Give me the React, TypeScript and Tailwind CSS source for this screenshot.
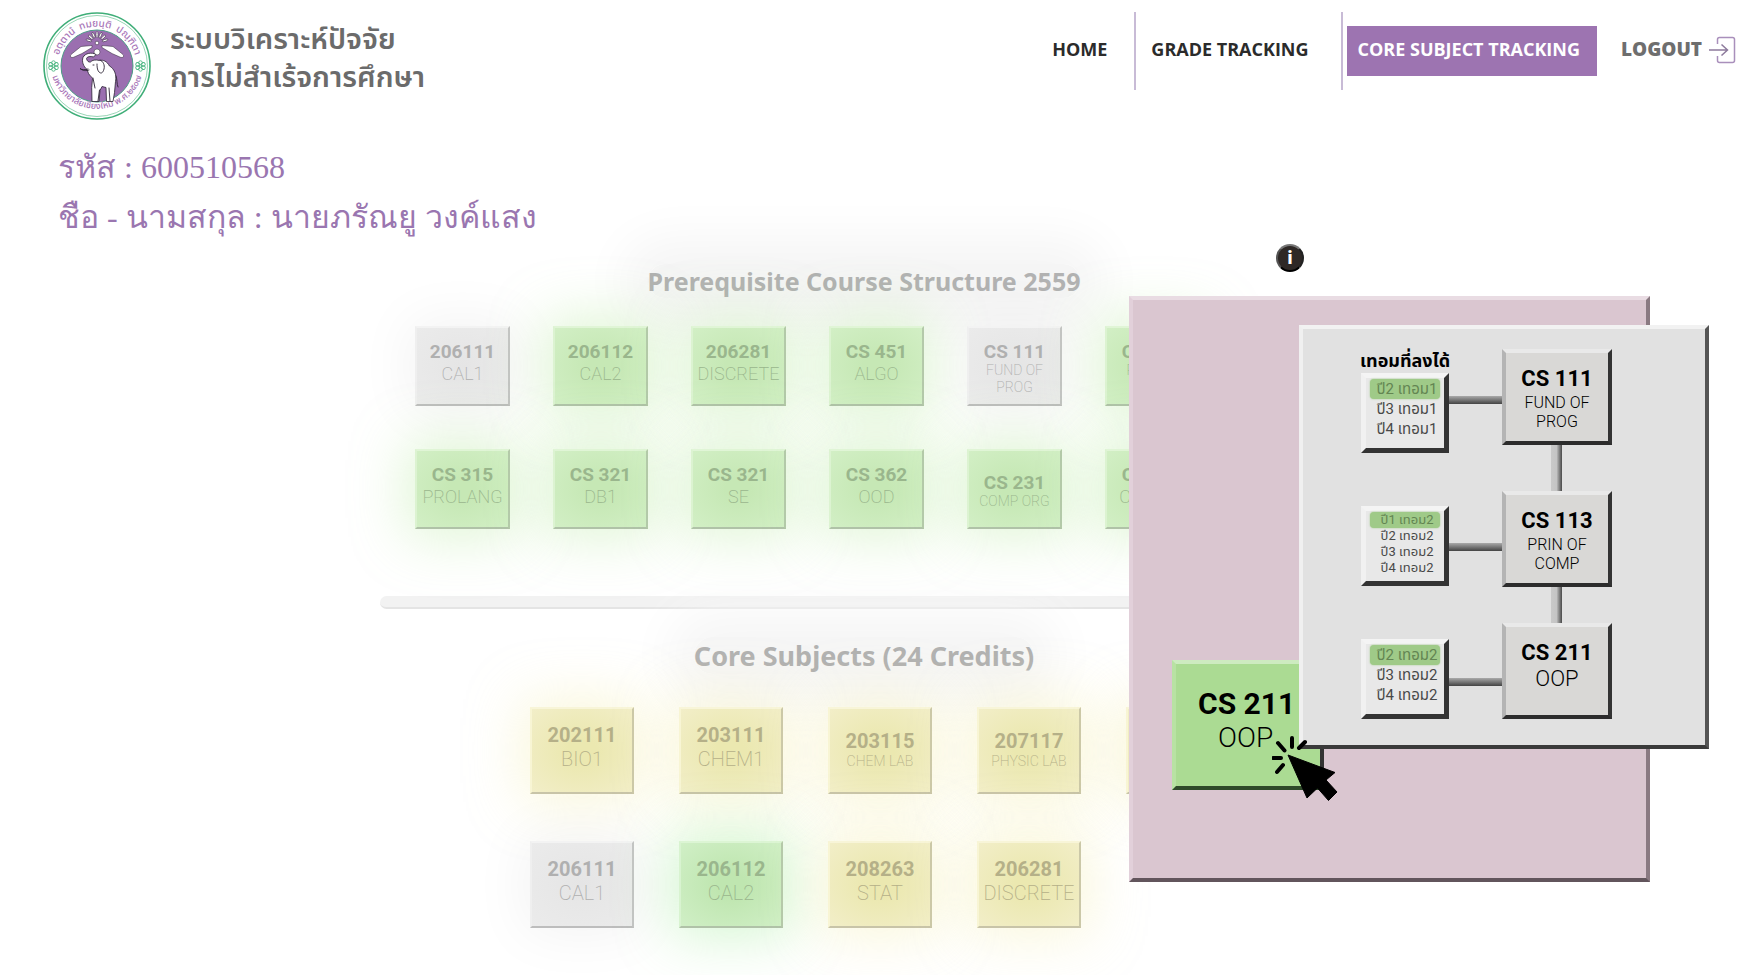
import React from "react";

type Tone = "gray" | "green" | "lime" | "yellow";
type Course = { code: string; name: string; tone: Tone; small?: boolean };

const prerequisites: Course[] = [
  { code: "206111", name: "CAL1", tone: "gray" },
  { code: "206112", name: "CAL2", tone: "green" },
  { code: "206281", name: "DISCRETE", tone: "green" },
  { code: "CS 451", name: "ALGO", tone: "green" },
  { code: "CS 111", name: "FUND OF PROG", tone: "gray", small: true },
  { code: "CS 113", name: "PRIN OF COMP", tone: "green", small: true },
  { code: "CS 315", name: "PROLANG", tone: "green" },
  { code: "CS 321", name: "DB1", tone: "green" },
  { code: "CS 321", name: "SE", tone: "green" },
  { code: "CS 362", name: "OOD", tone: "green" },
  { code: "CS 231", name: "COMP ORG", tone: "green", small: true },
  { code: "CS 352", name: "COM OS", tone: "green" },
];

const coreSubjects: Course[] = [
  { code: "202111", name: "BIO1", tone: "yellow" },
  { code: "203111", name: "CHEM1", tone: "yellow" },
  { code: "203115", name: "CHEM LAB", tone: "yellow", small: true },
  { code: "207117", name: "PHYSIC LAB", tone: "yellow", small: true },
  { code: "207187", name: "PHYSICS", tone: "yellow" },
  { code: "206111", name: "CAL1", tone: "gray" },
  { code: "206112", name: "CAL2", tone: "lime" },
  { code: "208263", name: "STAT", tone: "yellow" },
  { code: "206281", name: "DISCRETE", tone: "yellow" },
];

const tones: Record<Tone, string> = {
  gray: "border-t-[#f3f3f3] border-l-[#efefef] border-r-[#c4c4c4] border-b-[#bdbdbd] bg-[radial-gradient(#e5e5e5,#ebebeb)] text-[#b0b0b0] shadow-[0_0_56px_6px_rgba(0,0,0,0.05)]",
  green:
    "border-t-[#e0f5d6] border-l-[#dcf3d1] border-r-[#b4c9aa] border-b-[#b0c2a8] bg-[radial-gradient(#c6e8b5_20%,#d2efc5)] text-[#9ab68d] shadow-[0_0_56px_8px_rgba(160,225,130,0.34)]",
  lime: "border-t-[#dcf5d4] border-l-[#d8f3d0] border-r-[#b4c9aa] border-b-[#b0c2a8] bg-[radial-gradient(#bfe6b0_20%,#d0efc6)] text-[#9ab68d] shadow-[0_0_56px_8px_rgba(130,230,120,0.34)]",
  yellow:
    "border-t-[#f8f5d8] border-l-[#f8f5d4] border-r-[#cbc8a8] border-b-[#c8c4a8] bg-[radial-gradient(#ebe8b0_20%,#f2eec8)] text-[#b5b088] shadow-[0_0_56px_8px_rgba(240,232,150,0.34)]",
};

function PrerequisiteTile({ code, name, tone, small }: Course) {
  const oneLine = small && name.length < 10;
  const nameStyle = oneLine
    ? "text-sm leading-[17px] whitespace-nowrap"
    : small
      ? "px-3 text-sm leading-[17px]"
      : "text-lg leading-6";
  return (
    <button
      type="button"
      className={`flex h-20 w-[95px] flex-col items-center border-2 text-center ${oneLine ? "justify-center pt-1" : "justify-start pt-[13px]"} ${tones[tone]}`}
    >
      <span className="text-[19px] leading-[21px] font-bold">{code}</span>
      <span className={`font-extralight ${nameStyle}`}>{name}</span>
    </button>
  );
}

function CoreTile({ code, name, tone, small }: Course) {
  return (
    <button
      type="button"
      className={`flex h-[87px] w-[104px] flex-col items-center border-2 text-center ${small ? "justify-center pb-1" : "justify-start pt-[14px]"} ${tones[tone]}`}
    >
      <span className="text-xl leading-6 font-bold">{code}</span>
      <span className={`font-extralight ${small ? "text-sm leading-4" : "text-xl leading-6"}`}>{name}</span>
    </button>
  );
}

function Crest() {
  const rays = [-72, -48, -24, 0, 24, 48, 72];
  return (
    <svg viewBox="0 0 108 108" className="size-[108px] shrink-0" role="img" aria-label="มหาวิทยาลัยเชียงใหม่">
      <defs>
        <path id="crest-top" d="M14.500 54a39.500 39.500 0 0 1 79 0" />
        <path id="crest-bottom" d="M7 50a47 47 0 0 0 94 0" />
      </defs>
      <circle cx="54" cy="54" r="53" fill="#fff" stroke="#3fae78" strokeWidth="1.6" />
      <circle cx="54" cy="54" r="50.5" fill="none" stroke="#7fcaa3" strokeWidth="0.8" />
      <circle cx="54" cy="54" r="36" fill="#9b6fb0" stroke="#4c9b86" strokeWidth="1" />
      <g fill="#a875b8" fontSize="10" fontWeight="500" textAnchor="middle">
        <text>
          <textPath href="#crest-top" startOffset="50%">อตฺตานํ&#160; ทมยนฺติ&#160; ปณฺฑิตา</textPath>
        </text>
        <text fontSize="9">
          <textPath href="#crest-bottom" startOffset="50%">มหาวิทยาลัยเชียงใหม่ พ.ศ.๒๕๐๗</textPath>
        </text>
      </g>
      {[10.5, 97.5].map((x) => (
        <g key={x} fill="none" stroke="#4fb784" strokeWidth="0.9">
          {[0, 60, 120, 180, 240, 300].map((a) => (
            <circle key={a} cx={x} cy="50.600" r="1.800" transform={`rotate(${a} ${x} 54)`} />
          ))}
          <circle cx={x} cy="54" r="1.200" />
        </g>
      ))}
      <g fill="#fff" stroke="#2b2333" strokeWidth="0.5">
        {rays.map((a) => (
          <ellipse key={a} cx="54" cy="22.500" rx="1" ry="3" transform={`rotate(${a} 54 31)`} />
        ))}
        <path d="M49 33.500L38 34.500 28 42.500q-2 3 2 3l9-4 10-6z" />
        <path d="M59 33.500l11 1 10 8q2 3-2 3l-9-4-10-6z" />
        <circle cx="54" cy="31" r="1.800" />
        <circle cx="54" cy="40" r="3" />
      </g>
      <path
        d="M53 42.500c-4-2.500-11-1.500-13 3-1.500 4 .5 9 4 12l1.500 4c1.500 2.500 3 3 4 5l-.8 9 .3 14h7l1-11 2-4 4 1 .5 14h6.500l1.500-9 1-11c1.500-7-1.500-13-6-15.500-2.500-4.500-6-6.500-10-5.500-4-1-7.500-.5-9 1.500-2 .5-3.500-1-4-3.500.5-2 4-2.500 7-1.500z"
        fill="#fff"
        stroke="#2b2333"
        strokeWidth="0.8"
        strokeLinejoin="round"
      />
      <path
        d="M57 48c3 1 5 5 4 9s-3 5-5 3-2-6-2-8M45 57c-3 1-6 1-8-.5 3 2.500 6 2.500 9 1.500M73 64c1.500 4 .5 8 2 11M50 66l2 10M55 89l1.500-11M66 76l1 13M50 53h1"
        fill="none"
        stroke="#2b2333"
        strokeWidth="0.9"
        strokeLinecap="round"
      />
    </svg>
  );
}

function LogoutIcon() {
  return (
    <svg viewBox="0 0 28 28" className="h-7 w-7" fill="none" stroke="#a98fbb" strokeWidth="1.500" aria-hidden="true">
      <path d="M9.500 8V3.500a2 2 0 0 1 2-2h13a2 2 0 0 1 2 2v21a2 2 0 0 1-2 2h-13a2 2 0 0 1-2-2V20" />
      <path d="M1 14h18.500M13.500 8.500l6 5.500-6 5.500" stroke="#8d7a9c" />
    </svg>
  );
}

function ClickCursor() {
  return (
    <svg viewBox="0 0 66 66" className="size-[66px]" aria-hidden="true">
      <path d="M16 17l47 17.500-9 7.500 11 12-8.500 8.500L45.500 50 35 60z" fill="#000" stroke="#000" strokeLinejoin="round" transform="translate(0 2)" />
      <path d="M6 7l6.500 7.500M20 2v9M33 6l-6 6M1 22h8M5 36l6-7" stroke="#000" strokeWidth="4" strokeLinecap="round" />
    </svg>
  );
}

function TermBox({ terms }: { terms: string[] }) {
  const dense = terms.length > 3;
  return (
    <ul className="flex h-20 w-[88px] flex-col items-center border-[5px] border-t-[#f4f4f4] border-r-[#333] border-b-[#333] border-l-[#f1f1f1] bg-[#e8e8e8] pt-px text-[#484848]">
      {terms.map((term, i) => (
        <li
          key={term}
          className={`w-[70px] pl-1 text-center whitespace-nowrap ${dense ? "text-[13px] leading-4" : "text-[15px] leading-5"} ${i === 0 ? "rounded-sm bg-[#9fca88] text-[#638552] shadow-[0_0_2px_#9fca88]" : ""}`}
        >
          {term}
        </li>
      ))}
    </ul>
  );
}

function ChainBox({ code, name }: { code: string; name: string }) {
  const long = name.length > 5;
  return (
    <div className="flex h-24 w-[110px] flex-col items-center border-4 border-t-[#e9e9e9] border-r-[#333] border-b-[#2c2c2c] border-l-[#b4b4b4] bg-[#d9d8d6] pt-3 text-center text-black">
      <span className="text-[22px] leading-7 font-bold">{code}</span>
      <span className={`font-light ${long ? "w-20 text-base leading-[19px]" : "text-[22px] leading-6"}`}>{name}</span>
    </div>
  );
}

const link = "h-2 bg-linear-to-b from-[#aaa] via-[#777] to-[#444]";
const stem = "mr-[2px] w-[11px] self-center bg-linear-to-r from-[#c9c9c9] via-[#c4c4c4] to-[#4a4a4a]";

function TermPopup() {
  return (
    <section
      aria-label="CS 211"
      className="absolute top-[25px] left-[166px] flex h-[424px] w-[410px] border-4 border-t-[#f2f2f2] border-r-[#555] border-b-[#3a3a3a] border-l-[#f0f0f0] bg-[#e1e1e1] pt-5 pl-[58px]"
    >
      <div className="flex w-[88px] flex-col">
        <h3 className="-mx-2 text-center text-lg leading-6 font-bold whitespace-nowrap text-black">เทอมที่ลงได้</h3>
        <TermBox terms={["ปี2 เทอม1", "ปี3 เทอม1", "ปี4 เทอม1"]} />
        <div className="mt-[53px]">
          <TermBox terms={["ปี1 เทอม2", "ปี2 เทอม2", "ปี3 เทอม2", "ปี4 เทอม2"]} />
        </div>
        <div className="mt-[53px]">
          <TermBox terms={["ปี2 เทอม2", "ปี3 เทอม2", "ปี4 เทอม2"]} />
        </div>
      </div>
      <div className="flex w-[53px] flex-col pt-[47px]">
        <div className={link} />
        <div className={`mt-[139px] ${link}`} />
        <div className={`mt-[127px] ${link}`} />
      </div>
      <div className="flex flex-col">
        <ChainBox code="CS 111" name="FUND OF PROG" />
        <div className={`h-[46px] ${stem}`} />
        <ChainBox code="CS 113" name="PRIN OF COMP" />
        <div className={`h-9 ${stem}`} />
        <ChainBox code="CS 211" name="OOP" />
      </div>
    </section>
  );
}

export default function App() {
  return (
    <div className="min-h-screen overflow-x-hidden bg-white font-['Roboto','Noto_Sans_Thai',sans-serif]">
      <header className="flex items-start justify-between pt-3 pr-4 pl-[43px]">
        <div className="flex items-start gap-[19px]">
          <Crest />
          <h1 className="pt-2 text-[29px] leading-[38px] font-semibold text-[#6b6b6b]">
            ระบบวิเคราะห์ปัจจัย
            <br />
            การไม่สำเร้จการศึกษา
          </h1>
        </div>
        <nav className="flex h-[78px] items-center font-['Open_Sans',sans-serif] text-lg font-bold whitespace-nowrap text-[#2b2b2b]">
          <a href="#home" className="px-[27px] pb-1">HOME</a>
          <a href="#grades" className="flex h-full items-center border-l-2 border-[#c8bbd6] pr-8 pb-1 pl-[15px]">GRADE TRACKING</a>
          <div className="flex h-full items-center border-l-2 border-[#c8bbd6] pl-1">
            <a href="#core" aria-current="page" className="flex h-[50px] items-center bg-[#9d74b1] pr-[17px] pb-1 pl-[11px] text-white">
              CORE SUBJECT TRACKING
            </a>
          </div>
          <a href="#logout" className="ml-6 flex items-center gap-[6px] pb-[2px] text-[19px] font-extrabold text-[#6e6e6e]">
            LOGOUT
            <LogoutIcon />
          </a>
        </nav>
      </header>

      <div className="pt-[22px] pl-[58px] font-['Liberation_Serif',serif] text-[32px] leading-[50px] text-[#9a76b0]">
        <p>รหัส : 600510568</p>
        <p>ชือ - นามสกุล : นายภรัณยู วงค์แสง</p>
      </div>

      <main className="relative pb-[47px] pl-[380px]">
        <div className="w-[968px] pt-[23px]">
          <h2 className="text-center font-['Noto_Sans',sans-serif] text-[25px] leading-8 font-bold text-[#b2b2b2]">
            <span className="rounded-full bg-[#f5f5f5] shadow-[0_0_50px_26px_#f5f5f5]">Prerequisite Course Structure 2559</span>
          </h2>
          <div className="mt-[29px] grid grid-cols-[repeat(6,95px)] gap-[43px] pl-[35px]">
            {prerequisites.map((course, i) => (
              <PrerequisiteTile key={i} {...course} />
            ))}
          </div>
          <div className="mt-[67px] h-[13px] rounded-lg border-b-2 border-[#e4e4e4] bg-[#f2f2f2]" />
          <h2 className="mt-[31px] text-center font-['Noto_Sans',sans-serif] text-[27px] leading-8 font-bold text-[#b2b2b2]">
            <span className="rounded-full bg-[#f6f6f6] shadow-[0_0_50px_26px_#f6f6f6]">Core Subjects (24 Credits)</span>
          </h2>
          <div className="mt-[35px] grid grid-cols-[repeat(5,104px)] gap-x-[45px] gap-y-[47px] pl-[150px]">
            {coreSubjects.map((course, i) => (
              <CoreTile key={i} {...course} />
            ))}
          </div>
        </div>

        <button
          type="button"
          aria-label="Information"
          className="absolute top-[2px] left-[1276px] flex size-7 items-center justify-center rounded-full border-2 border-t-[#777] border-r-[#222] border-b-black border-l-[#555] bg-[#2e2826] text-lg leading-5 font-black text-white"
        >
          i
        </button>

        <aside className="absolute top-[54px] left-[1129px] h-[586px] w-[521px] border-4 border-t-[#e9dce3] border-r-[#8a7a82] border-b-[#62555c] border-l-[#e2d0da] bg-[#dac6d0]">
          <button
            type="button"
            className="absolute top-[360px] left-[39px] flex h-[130px] w-[152px] flex-col items-start border-4 border-t-[#cdebc0] border-r-[#333] border-b-[#2f4a2a] border-l-[#b8e2a3] bg-[#abdb93] pt-[22px] pl-[22px] text-black"
          >
            <span className="text-[30px] leading-9 font-bold">CS 211</span>
            <span className="pl-5 text-[28px] leading-8 font-light">OOP</span>
          </button>
          <TermPopup />
          <div className="absolute top-[436px] left-[139px]">
            <ClickCursor />
          </div>
        </aside>
      </main>
    </div>
  );
}
